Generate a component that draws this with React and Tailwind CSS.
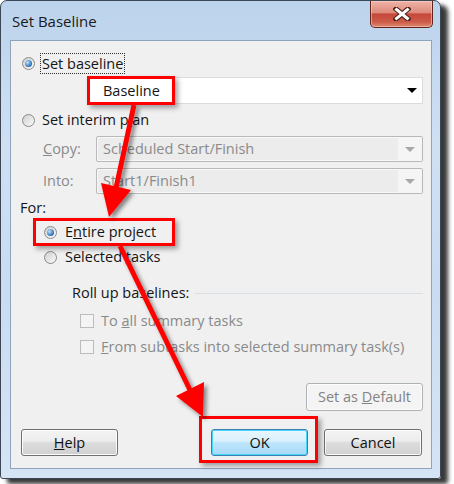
import React from "react";

function Radio({ checked }) {
  return (
    <span className="w-[13px] h-[13px] rounded-full border border-[#8a8a8a] bg-gradient-to-br from-[#cfcfcf] to-[#fbfbfb] flex items-center justify-center shrink-0">
      {checked && (
        <span className="w-[7px] h-[7px] rounded-full bg-[radial-gradient(circle_at_35%_35%,#bfe2fb,#2a6cb5_70%,#1b4f8a)]" />
      )}
    </span>
  );
}

function Check() {
  return (
    <span className="w-[14px] h-[14px] border border-[#bcbcbc] bg-[#f4f4f4] shrink-0" />
  );
}

function Arrow({ disabled }) {
  return (
    <span
      className={
        "w-0 h-0 border-l-[5px] border-r-[5px] border-t-[5px] border-l-transparent border-r-transparent " +
        (disabled ? "border-t-[#a8a8a8]" : "border-t-black")
      }
    />
  );
}

function Button({ children, variant, className }) {
  const base =
    "h-[27px] rounded-[3px] border flex items-center justify-center text-[14.5px] ";
  let v =
    "border-[#707070] bg-[linear-gradient(#f4f4f4,#ececec_45%,#dddddd_50%,#d0d0d0)] text-[#111] shadow-[inset_0_0_0_1px_#fcfcfc]";
  if (variant === "ok")
    v =
      "border-[#3c7fb1] bg-[linear-gradient(#eaf6fd,#d9f0fc_45%,#bee6fd_50%,#a7d9f5)] text-[#111] shadow-[inset_0_0_0_1px_#48d5fa]";
  if (variant === "disabled")
    v = "border-[#adb2b5] bg-[#f4f4f4] text-[#838383] shadow-[inset_0_0_0_1px_#fcfcfc]";
  return (
    <div className={base + v + " " + (className || "")}>
      <span>{children}</span>
    </div>
  );
}

export default function App() {
  return (
    <div className="relative w-[454px] h-[484px] bg-white overflow-hidden font-['Open_Sans',sans-serif]">
      {/* window */}
      <div className="w-[441px] h-[479px] rounded-t-[7px] rounded-b-[3px] border border-[#3d4753] bg-[linear-gradient(#bcd3ec,#cfe0f3_30%,#c9dcf1_60%,#d6e5f5)] shadow-[7px_5px_4px_rgba(0,0,0,0.78)] flex flex-col">
        {/* title bar */}
        <div className="h-[39px] flex items-start justify-between">
          <div className="pl-[11px] pt-[11px] text-[15px] leading-[18px] text-[#1a1a1a]">
            Set Baseline
          </div>
          <div className="mr-[7px] w-[63px] h-[27px] rounded-b-[5px] border border-t-0 border-[#5f251d] bg-[linear-gradient(#eeb4a8,#dd8a7b_45%,#c6473a_50%,#cc5b48_80%,#e08a70)] flex items-center justify-center shadow-[inset_0_0_0_1px_rgba(255,220,210,0.5)]">
            <svg width="18" height="14" viewBox="0 0 18 14">
              <path d="M3 2 L15 12 M15 2 L3 12" stroke="#4a1a14" strokeWidth="5" strokeLinecap="square" />
              <path d="M3.5 2.5 L14.5 11.5 M14.5 2.5 L3.5 11.5" stroke="#ffffff" strokeWidth="3" strokeLinecap="square" />
            </svg>
          </div>
        </div>

        {/* client */}
        <div className="ml-[9px] w-[422px] h-[429px] border border-[#8ea3bc] bg-[#f0f0f0] flex flex-col text-[14.5px] text-[#151515]">
          {/* Set baseline */}
          <div className="mt-[10px] h-[24px] flex items-center pl-[11px]">
            <Radio checked />
            <span className="ml-[6px] px-[1px] leading-[19px] outline outline-1 outline-dotted outline-[#333]">
              Set baseline
            </span>
          </div>
          <div className="mt-[2px] ml-[77px] w-[335px] h-[27px] bg-white border border-[#dcdcdc] flex items-center justify-between pl-[14px] pr-[5px]">
            <span>Baseline</span>
            <Arrow />
          </div>

          {/* Set interim plan */}
          <div className="mt-[4px] h-[24px] flex items-center pl-[11px]">
            <Radio />
            <span className="ml-[7px]">
              Set interim p<u>l</u>an
            </span>
          </div>
          <div className="mt-[4px] h-[26px] flex items-center">
            <span className="w-[85px] pl-[32px] text-[#8a8a8a]">
              <u>C</u>opy:
            </span>
            <div className="w-[327px] h-[26px] rounded-[2px] border border-[#b9b9b9] bg-[#ececec] shadow-[inset_0_0_0_1px_#f8f8f8] flex items-center justify-between text-[#8a8a8a]">
              <span className="pl-[6px]">Scheduled Start/Finish</span>
              <span className="w-[24px] h-full bg-[#f5f5f5] flex items-center justify-center">
                <Arrow disabled />
              </span>
            </div>
          </div>
          <div className="mt-[6px] h-[26px] flex items-center">
            <span className="w-[85px] pl-[32px] text-[#8a8a8a]">Into:</span>
            <div className="w-[327px] h-[26px] rounded-[2px] border border-[#b9b9b9] bg-[#ececec] shadow-[inset_0_0_0_1px_#f8f8f8] flex items-center justify-between text-[#8a8a8a]">
              <span className="pl-[6px]">Start1/Finish1</span>
              <span className="w-[24px] h-full bg-[#f5f5f5] flex items-center justify-center">
                <Arrow disabled />
              </span>
            </div>
          </div>

          {/* For */}
          <div className="mt-[4px] h-[20px] flex items-center pl-[9px]">For:</div>
          <div className="mt-[2px] h-[24px] flex items-center pl-[33px]">
            <Radio checked />
            <span className="ml-[8px]">
              E<u>n</u>tire project
            </span>
          </div>
          <div className="mt-[1px] h-[24px] flex items-center pl-[33px]">
            <Radio />
            <span className="ml-[8px]">
              Selected <u>t</u>asks
            </span>
          </div>

          {/* Roll up */}
          <div className="mt-[14px] h-[20px] flex items-center pl-[61px] pr-[8px]">
            <span>Roll up baselines:</span>
            <span className="ml-[6px] flex-1 h-px bg-[#d5dfe5]" />
          </div>
          <div className="mt-[7px] h-[22px] flex items-center pl-[69px] text-[#8a8a8a]">
            <Check />
            <span className="ml-[7px]">
              To <u>a</u>ll summary tasks
            </span>
          </div>
          <div className="mt-[4px] h-[22px] flex items-center pl-[69px] text-[#8a8a8a]">
            <Check />
            <span className="ml-[7px]">
              <u>F</u>rom subtasks into selected summary task(s)
            </span>
          </div>

          <div className="mt-[25px] flex justify-end pr-[8px]">
            <Button variant="disabled" className="w-[117px] h-[28px]">
              Set as <u>D</u>efault
            </Button>
          </div>

          <div className="mt-[18px] flex items-center pl-[10px]">
            <Button className="w-[97px]">
              <u>H</u>elp
            </Button>
            <Button variant="ok" className="ml-[93px] w-[97px]">
              OK
            </Button>
            <Button className="ml-[16px] w-[98px]">Cancel</Button>
          </div>
        </div>
      </div>

      {/* red annotation rectangles */}
      <div className="absolute left-[87px] top-[76px] w-[88px] h-[29px] border-[3px] border-[#ff0000] shadow-[3px_3px_5px_rgba(0,0,0,0.35)]" />
      <div className="absolute left-[33px] top-[218px] w-[142px] h-[28px] border-[3px] border-[#ff0000] shadow-[3px_3px_5px_rgba(0,0,0,0.35)]" />
      <div className="absolute left-[199px] top-[416px] w-[119px] h-[47px] border-[3px] border-[#ff0000] shadow-[3px_3px_5px_rgba(0,0,0,0.35)]" />

      {/* arrows */}
      <svg className="absolute left-0 top-0" width="454" height="484" viewBox="0 0 454 484">
        <defs>
          <filter id="sh" x="-20%" y="-20%" width="140%" height="140%">
            <feDropShadow dx="3" dy="3" stdDeviation="2" floodColor="#000" floodOpacity="0.45" />
          </filter>
        </defs>
        <g filter="url(#sh)" fill="#ff0000" stroke="#ff0000">
          <line x1="134" y1="105" x2="116" y2="188" strokeWidth="5" />
          <polygon points="109,217 101,183 131,190" stroke="none" />
          <line x1="120" y1="246" x2="190" y2="390" strokeWidth="5" />
          <polygon points="203,417 176,396 204,382" stroke="none" />
        </g>
      </svg>
    </div>
  );
}
